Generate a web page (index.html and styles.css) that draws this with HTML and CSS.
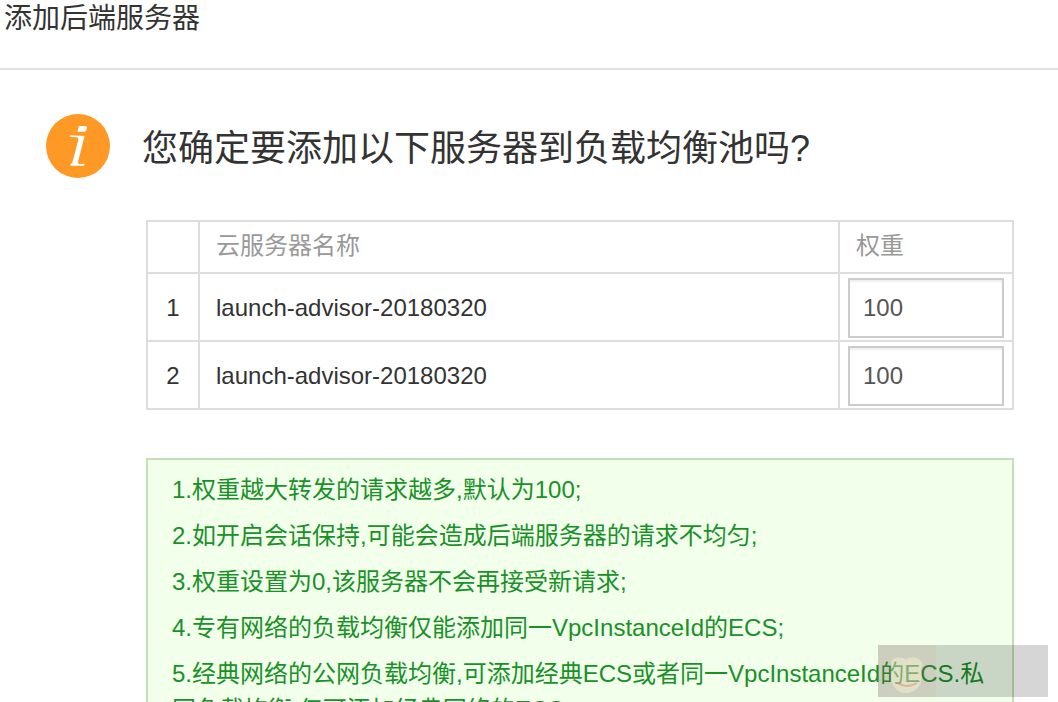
FILE: index.html
```html
<!DOCTYPE html>
<html lang="zh-CN">
<head>
    <meta charset="UTF-8">
    <meta name="viewport" content="width=device-width, initial-scale=1.0">
    <title>添加后端服务器</title>
    <link rel="stylesheet" href="styles.css">
</head>
<body>
    <header class="dialog-header">
        <h1 class="dialog-title">添加后端服务器</h1>
    </header>

    <main class="dialog-body">
        <div class="confirm">
            <svg class="confirm-icon" viewBox="0 0 64 64" aria-hidden="true">
                <circle cx="32" cy="32" r="32" fill="#ff9926"/>
                <path d="M33 12h6.500q2 0 1.500 2l-.6 2q-.5 1.800-2.400 1.800H31.500l1-4.500z" fill="#fff"/>
                <path d="M24 21.300l14.500.7-6.300 25.500q-.7 2.700 2 2.600l4.300-.3-.5 2H24.500v-1.600q1.500-.4 2.200-3l5.300-20q.9-3.700-1.700-4l-6.300-.4z" fill="#fff"/>
            </svg>
            <h2 class="confirm-title">您确定要添加以下服务器到负载均衡池吗?</h2>
        </div>

        <div class="details">
            <table class="server-table">
                <thead>
                    <tr>
                        <th class="col-index"></th>
                        <th>云服务器名称</th>
                        <th class="col-weight">权重</th>
                    </tr>
                </thead>
                <tbody>
                    <tr>
                        <td class="col-index">1</td>
                        <td>launch-advisor-20180320</td>
                        <td class="col-weight"><input class="weight-input" type="text" value="100" aria-label="权重"></td>
                    </tr>
                    <tr>
                        <td class="col-index">2</td>
                        <td>launch-advisor-20180320</td>
                        <td class="col-weight"><input class="weight-input" type="text" value="100" aria-label="权重"></td>
                    </tr>
                </tbody>
            </table>

            <div class="notes">
                <p>1.权重越大转发的请求越多,默认为100;</p>
                <p>2.如开启会话保持,可能会造成后端服务器的请求不均匀;</p>
                <p>3.权重设置为0,该服务器不会再接受新请求;</p>
                <p>4.专有网络的负载均衡仅能添加同一VpcInstanceId的ECS;</p>
                <p>5.经典网络的公网负载均衡,可添加经典ECS或者同一VpcInstanceId的ECS.私网负载均衡,仅可添加经典网络的ECS;</p>
            </div>
        </div>
    </main>

    <div class="watermark">
        <svg class="watermark-logo" viewBox="0 0 58 52" aria-hidden="true">
            <rect width="58" height="52" fill="#dca08c" opacity=".12"/>
            <path d="M28 15c-3-4-15-3-15 3 0 3 2 4 1 7-3 12 3 23 14 23s18-10 15-22c-1-4 2-5 1-8-2-6-13-7-16-3z" fill="#fffbd8" opacity=".4"/>
            <path d="M19 38q10 6 20 0" fill="none" stroke="#d08a78" stroke-width="2" opacity=".5"/>
        </svg>
    </div>
</body>
</html>
```

FILE: styles.css
```css
* {
    box-sizing: border-box;
}
body {
    height: 100vh;
    margin: 0;
    overflow: hidden;
    background-color: #fff;
    color: #333;
    font-family: "Liberation Sans", "Noto Sans CJK SC", sans-serif;
    font-size: 24px;
    line-height: 36px;
}
h1,
h2,
p {
    margin: 0;
    font-weight: normal;
}
.dialog-header {
    padding: 0 4px 30px;
    border-bottom: 2px solid #e2e2e2;
}
.dialog-title {
    font-size: 28px;
    line-height: 38px;
}
.dialog-body {
    padding: 44px 44px 0 46px;
}
.confirm {
    display: flex;
    align-items: flex-start;
    gap: 32px;
}
.confirm-icon {
    flex: none;
    width: 64px;
    height: 64px;
}
.confirm-title {
    font-size: 36px;
    line-height: 70px;
}
.details {
    padding: 36px 0 0 100px;
}
.server-table {
    width: 100%;
    border-collapse: collapse;
    table-layout: fixed;
}
.server-table th,
.server-table td {
    height: 68px;
    padding: 0 16px;
    border: 2px solid #ddd;
    text-align: left;
}
.server-table th {
    height: 52px;
    padding-bottom: 2px;
    color: #999;
    font-weight: normal;
}
.server-table td {
    padding-top: 2px;
}
.server-table .col-index {
    width: 52px;
    padding-right: 0;
    padding-left: 0;
    text-align: center;
}
.server-table .col-weight {
    width: 174px;
}
.server-table td.col-weight {
    padding: 4px 8px 2px;
}
.weight-input {
    display: block;
    width: 100%;
    height: 60px;
    padding: 0 13px;
    border: 2px solid #ccc;
    border-radius: 0;
    background-color: #fff;
    box-shadow: inset 0 2px 2px rgba(0, 0, 0, 0.07);
    color: #555;
    font: inherit;
}
.notes {
    display: flex;
    flex-direction: column;
    gap: 10px;
    margin-top: 48px;
    padding: 12px 24px;
    border: 2px solid #c2dfb8;
    background-color: #f1ffeb;
    color: #1a9128;
}
.watermark {
    position: fixed;
    right: 10px;
    bottom: 5px;
    width: 170px;
    height: 52px;
    background-color: rgba(0, 0, 0, 0.16);
}
.watermark-logo {
    display: block;
    width: 58px;
    height: 52px;
}
```
